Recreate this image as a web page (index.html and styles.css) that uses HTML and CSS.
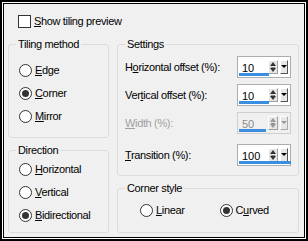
FILE: index.html
```html
<!DOCTYPE html>
<html lang="en">
  <head>
    <meta charset="UTF-8" />
    <title>Tile settings</title>
    <link rel="stylesheet" href="styles.css">
  </head>
  <body>
    <div class="frame">
      <div class="dialog">
        <label class="check">
          <span class="box"></span>
          <span><u>S</u>how tiling preview</span>
        </label>

        <div class="cols">
          <div class="col">
            <fieldset class="group tiling">
              <legend>Tiling method</legend>
              <div class="inner">
                <div class="radio"><span class="dot"></span><span><u>E</u>dge</span></div>
                <div class="radio"><span class="dot on"></span><span><u>C</u>orner</span></div>
                <div class="radio"><span class="dot"></span><span><u>M</u>irror</span></div>
              </div>
            </fieldset>

            <fieldset class="group direction">
              <legend>Direction</legend>
              <div class="inner">
                <div class="radio"><span class="dot"></span><span><u>H</u>orizontal</span></div>
                <div class="radio"><span class="dot"></span><span><u>V</u>ertical</span></div>
                <div class="radio"><span class="dot on"></span><span><u>B</u>idirectional</span></div>
              </div>
            </fieldset>
          </div>

          <div class="col">
            <fieldset class="group settings">
              <legend>Settings</legend>
              <div class="inner">
                <div class="row">
                  <span>H<u>o</u>rizontal offset (%):</span>
                  <div class="spin">
                    <span class="val">10</span>
                    <span class="updown"></span>
                    <span class="drop"></span>
                    <span class="bar" style="width: 30px"></span>
                  </div>
                </div>
                <div class="row">
                  <span>Ver<u>t</u>ical offset (%):</span>
                  <div class="spin">
                    <span class="val">10</span>
                    <span class="updown"></span>
                    <span class="drop"></span>
                    <span class="bar" style="width: 30px"></span>
                  </div>
                </div>
                <div class="row off">
                  <span><u>W</u>idth (%):</span>
                  <div class="spin">
                    <span class="val">50</span>
                    <span class="updown"></span>
                    <span class="drop"></span>
                    <span class="bar" style="width: 27px"></span>
                  </div>
                </div>
                <div class="row last">
                  <span><u>T</u>ransition (%):</span>
                  <div class="spin">
                    <span class="val">100</span>
                    <span class="updown"></span>
                    <span class="drop"></span>
                    <span class="bar" style="width: 52px"></span>
                  </div>
                </div>
              </div>
            </fieldset>

            <fieldset class="group corner">
              <legend>Corner style</legend>
              <div class="inner">
                <div class="radio"><span class="dot"></span><span><u>L</u>inear</span></div>
                <div class="radio"><span class="dot on"></span><span>C<u>u</u>rved</span></div>
              </div>
            </fieldset>
          </div>
        </div>
      </div>
    </div>
  </body>
</html>
```

FILE: styles.css
```css
body {
  margin: 0;
  font-family: "Liberation Sans", Arial, sans-serif;
  font-size: 11px;
  letter-spacing: -0.35px;
  color: #000;
}

.frame {
  width: 308px;
  height: 241px;
  box-sizing: border-box;
  border: 2px solid #000;
  padding: 1px;
  background: #fff;
}

.dialog {
  height: 100%;
  box-sizing: border-box;
  border: 1px solid #000;
  background: #f0f0f0;
  padding: 10px 5px 4px 4px;
}

/* checkbox row */
.check {
  display: flex;
  align-items: center;
  gap: 3px;
  height: 14px;
  margin-left: 10px;
}

.box {
  width: 13px;
  height: 13px;
  box-sizing: border-box;
  border: 1px solid #333;
  background: #fff;
}

.cols {
  display: flex;
  gap: 8px;
  margin-top: 9px;
}

.col {
  display: flex;
  flex-direction: column;
  gap: 5px;
}

.group {
  display: block;
  margin: 0;
  padding: 0;
  min-width: 0;
  border: 1px solid #dcdcdc;
  border-radius: 3px;
  box-sizing: border-box;
}

.group legend {
  margin: 0 0 0 7px;
  padding: 0 2px;
  line-height: 14px;
}

.inner {
  display: flex;
  flex-direction: column;
}

.tiling {
  width: 101px;
  height: 101px;
}

.tiling .inner {
  padding: 12px 0 0 10px;
  gap: 9px;
}

.direction {
  width: 101px;
  height: 90px;
}

.direction .inner {
  padding: 5px 0 0 10px;
  gap: 9px;
}

.settings {
  width: 182px;
  height: 139px;
}

.settings .inner {
  padding: 5px 7px 0 7px;
  gap: 6px;
}

.corner {
  width: 182px;
  height: 52px;
}

.corner .inner {
  flex-direction: row;
  padding: 8px 0 0 22px;
  gap: 35px;
}

/* radio buttons */
.radio {
  display: flex;
  align-items: center;
  gap: 3px;
  height: 14px;
}

.dot {
  width: 13px;
  height: 13px;
  box-sizing: border-box;
  border: 1px solid #333;
  border-radius: 50%;
  background: #fff;
  position: relative;
}

.dot.on::after {
  content: "";
  position: absolute;
  inset: 2px;
  border-radius: 50%;
  background: #333;
}

/* settings rows */
.row {
  display: flex;
  align-items: center;
  justify-content: space-between;
  height: 22px;
}

.row.last {
  margin-top: 4px;
}

.row.off {
  color: #a0a0a0;
}

.spin {
  position: relative;
  display: flex;
  align-items: center;
  width: 54px;
  height: 22px;
  box-sizing: border-box;
  border: 1px solid #abadb3;
  background: #fff;
  color: #000;
  padding-right: 2px;
  letter-spacing: 0;
}

.off .spin {
  background: #f0f0f0;
  border-color: #cfcfcf;
  color: #8a8a8a;
}

.spin .val {
  flex: 1;
  padding-left: 4px;
  padding-top: 2px;
}

.spin .bar {
  position: absolute;
  left: 1px;
  bottom: 1px;
  height: 3px;
  background: #3b8de0;
}

.updown {
  position: relative;
  width: 10px;
  height: 14px;
  box-sizing: border-box;
  background: #e6e6e6;
  border-top: 1px solid #fff;
  border-left: 1px solid #fff;
  border-right: 1px solid #a0a0a0;
  border-bottom: 1px solid #a0a0a0;
  margin-right: 2px;
}

.updown::before,
.updown::after {
  content: "";
  position: absolute;
  left: 1px;
  border-left: 3px solid transparent;
  border-right: 3px solid transparent;
}

.updown::before {
  top: 1px;
  border-bottom: 4px solid #333;
}

.updown::after {
  bottom: 1px;
  border-top: 4px solid #333;
  box-shadow: 0 -2px 0 -1px #888;
}

.drop {
  position: relative;
  width: 8px;
  height: 14px;
  box-sizing: border-box;
  background: #e6e6e6;
  border-top: 1px solid #fff;
  border-left: 1px solid #fff;
  border-right: 1px solid #555;
  border-bottom: 1px solid #555;
}

.drop::after {
  content: "";
  position: absolute;
  left: 0;
  top: 4px;
  border-left: 3px solid transparent;
  border-right: 3px solid transparent;
  border-top: 3px solid #000;
}

.off .updown::before {
  border-bottom-color: #999;
}

.off .updown::after {
  border-top-color: #999;
}

.off .drop {
  border-right-color: #aaa;
  border-bottom-color: #aaa;
}

.off .drop::after {
  border-top-color: #999;
}
```
